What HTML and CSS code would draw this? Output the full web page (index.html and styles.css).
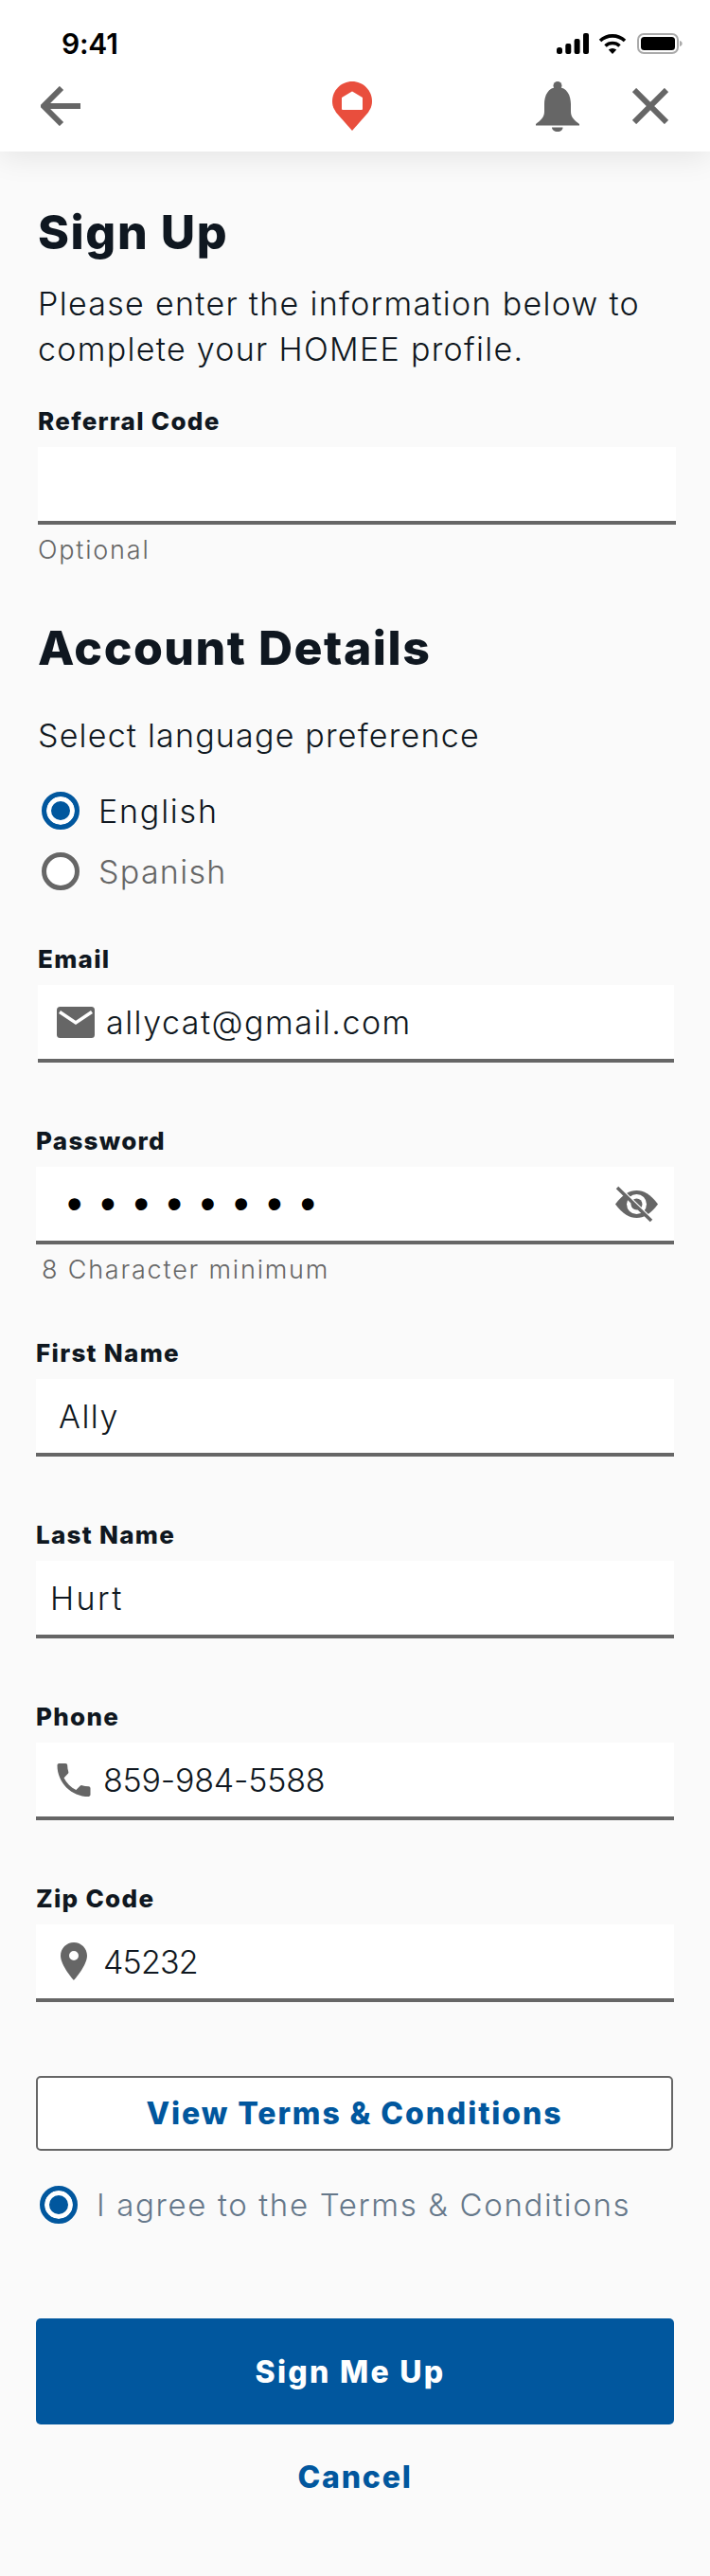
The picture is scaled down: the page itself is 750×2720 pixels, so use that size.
FILE: index.html
```html
<!DOCTYPE html>
<html lang="en">
<head>
<meta charset="UTF-8">
<meta name="viewport" content="width=device-width, initial-scale=1.0">
<title>Sign Up</title>
<link rel="stylesheet" href="styles.css">
</head>
<body>
<header class="topbar">
    <div class="status">
        <span class="time">9:41</span>
        <div class="status-icons">
            <svg class="signal" width="34" height="22" viewBox="0 0 34 22"><rect x="0" y="15" width="6" height="7" rx="2.5"/><rect x="9.3" y="11" width="6" height="11" rx="2"/><rect x="18.6" y="6" width="6" height="16" rx="2"/><rect x="28" y="0" width="6" height="22" rx="2"/></svg>
            <svg class="wifi" width="30" height="22" viewBox="0 0 30 22"><path class="wifi-arc" d="M2 8A19 19 0 0 1 28 8"/><path class="wifi-arc" d="M7.5 13.5A11 11 0 0 1 22.5 13.5"/><path d="M15 22L10.8 17.6A6 6 0 0 1 19.2 17.6Z"/></svg>
            <svg class="battery" width="48" height="22" viewBox="0 0 48 22"><rect class="battery-case" x="1" y="1" width="42" height="20" rx="6"/><rect x="4" y="4" width="36" height="14" rx="3.5"/><path class="battery-nub" d="M45 8c2 .6 2.6 1.6 2.6 3s-.6 2.4-2.6 3z"/></svg>
        </div>
    </div>
    <nav class="nav">
        <svg class="nav-back" width="42" height="42" viewBox="0 0 42 42"><path d="M42 21H4M22 2L3 21L22 40"/></svg>
        <svg class="nav-logo" width="42" height="52" viewBox="0 0 42 52"><path class="logo-pin" d="M21 0C32.6 0 42 9.4 42 21C42 27 39 31.5 36 35L21 52L6 35C3 31.5 0 27 0 21C0 9.4 9.4 0 21 0Z"/><path class="logo-house" d="M21 11.5L31 17.5V29H11V17.5Z"/></svg>
        <svg class="nav-bell" width="46" height="53" viewBox="0 0 46 53"><circle cx="23" cy="4.5" r="4.5"/><path d="M23 6C13 6 9 15 9 24V32C9 38 5 41 0 45V46.5H46V45C41 41 37 38 37 32V24C37 15 33 6 23 6Z"/><path d="M17 48.5H28.500C28.500 51 26.500 53 23 53C19.500 53 17 51 17 48.500Z"/></svg>
        <svg class="nav-close" width="38" height="38" viewBox="0 0 38 38"><path d="M2 2L36 36M36 2L2 36"/></svg>
    </nav>
</header>

<main class="page">
    <h1 class="title">Sign Up</h1>
    <p class="lead">Please enter the information below to complete your HOMEE profile.</p>

    <section class="field field-referral">
        <div class="label">Referral Code</div>
        <div class="input"></div>
        <div class="hint">Optional</div>
    </section>

    <h1 class="title title-account">Account Details</h1>
    <p class="lead lead-language">Select language preference</p>
    <div class="radio-group">
        <div class="radio-row"><span class="radio radio-on"></span>English</div>
        <div class="radio-row radio-row-off"><span class="radio"></span>Spanish</div>
    </div>

    <section class="field field-email">
        <div class="label">Email</div>
        <div class="input">
            <span class="input-icon">
                <svg width="40" height="33" viewBox="0 0 40 33"><rect width="40" height="33" rx="3.500"/><path class="mail-flap" d="M3 5.500L20 17L37 5.500"/></svg>
            </span>
            allycat@gmail.com
        </div>
    </section>

    <section class="field field-hinted">
        <div class="label">Password</div>
        <div class="input input-password">
            <span class="dots">••••••••</span>
            <svg class="eye" width="45" height="39" viewBox="0 0 45 39"><path d="M0 19.500C8 9 15 5 22.500 5C30 5 37 9 45 19.500C37 30 30 34 22.500 34C15 34 8 30 0 19.500Z"/><circle class="eye-ring" cx="22.500" cy="19.500" r="10.500"/><circle cx="22.500" cy="19.500" r="6"/><path class="eye-gap" d="M4 2L40 37"/><path class="eye-slash" d="M2 2L38 37"/></svg>
        </div>
        <div class="hint hint-password">8 Character minimum</div>
    </section>

    <section class="field">
        <div class="label">First Name</div>
        <div class="input input-first">Ally</div>
    </section>

    <section class="field">
        <div class="label">Last Name</div>
        <div class="input input-last">Hurt</div>
    </section>

    <section class="field">
        <div class="label">Phone</div>
        <div class="input input-phone">
            <span class="input-icon">
                <svg width="36" height="35" viewBox="3 3 18 18"><path d="M6.620 10.790c1.440 2.830 3.760 5.140 6.590 6.590l2.200-2.200c.27-.27.67-.36 1.020-.24 1.120.37 2.330.57 3.570.57.55 0 1 .45 1 1V20c0 .55-.45 1-1 1-9.390 0-17-7.610-17-17 0-.55.45-1 1-1h3.500c.55 0 1 .45 1 1 0 1.250.2 2.450.57 3.570.11.35.03.74-.25 1.020l-2.200 2.200z"/></svg>
            </span>
            859-984-5588
        </div>
    </section>

    <section class="field">
        <div class="label">Zip Code</div>
        <div class="input input-zip">
            <span class="input-icon">
                <svg width="28" height="40" viewBox="5 2 14 20"><path d="M12 2C8.130 2 5 5.130 5 9c0 5.250 7 13 7 13s7-7.750 7-13c0-3.870-3.130-7-7-7zm0 9.500a2.500 2.500 0 0 1 0-5 2.500 2.500 0 0 1 0 5z"/></svg>
            </span>
            45232
        </div>
    </section>

    <a class="btn btn-outline" href="#">View Terms &amp; Conditions</a>
    <div class="agree"><span class="radio radio-on"></span>I agree to the Terms &amp; Conditions</div>
    <a class="btn btn-primary" href="#">Sign Me Up</a>
    <a class="cancel" href="#">Cancel</a>
</main>
</body>
</html>
```

FILE: styles.css
```css
:root{
    --brand:#01579e;
    --bg:#fafafa;
    --ink:#0f1720;
    --gray:#666;
}
*{box-sizing:border-box;margin:0;padding:0;}
body{
    font-family:'Inter',sans-serif;
    background:var(--bg);
    color:var(--ink);
}
svg{display:block;}

/* top bar */
.topbar{
    background:#fff;
    height:160px;
    box-shadow:0 6px 30px rgba(0,0,0,.09);
    position:relative;
}
.status{
    height:64px;
    padding:28px 29px 0 65px;
    display:flex;
    justify-content:space-between;
}
.time{
    font-size:30px;
    line-height:36px;
    font-weight:600;
    color:#000;
    letter-spacing:-.2px;
}
.status-icons{
    display:flex;
    align-items:center;
    gap:10px;
    height:36px;
}
.wifi-arc{fill:none;stroke:#000;stroke-width:3.6;}
.battery-case{fill:none;stroke:#aaa;stroke-width:2;}
.battery-nub{fill:#aaa;}
.battery{margin-left:1px;}
.nav{
    height:96px;
    display:flex;
    align-items:center;
    padding-left:43px;
}
.nav svg{fill:var(--gray);}
.nav-back,.nav-close{stroke:var(--gray);stroke-width:6;}
.nav svg.nav-back,.nav svg.nav-close{fill:none;}
.nav-logo{margin-left:266px;}
.nav-bell{margin-left:173px;}
.nav-close{margin-left:56px;}
.logo-pin{fill:#e94e3d;}
.logo-house{fill:#fff;stroke:#fff;stroke-width:2;stroke-linejoin:round;}

/* form */
.page{padding:56px 38px 0;}
.title{
    font-size:50px;
    line-height:58px;
    font-weight:800;
    margin-left:2px;
    letter-spacing:1.6px;
}
.title-account{margin-top:58px;letter-spacing:1.5px;}
.lead{
    font-size:34px;
    line-height:48px;
    font-weight:300;
    letter-spacing:1.3px;
    margin:23px 0 35px 2px;
}
.lead-language{margin:40px 0 23px 2px;letter-spacing:1.2px;}
.radio-group{margin-bottom:44px;}
.radio-row{
    height:64px;
    display:flex;
    align-items:center;
    gap:20px;
    padding-left:6px;
    font-size:34px;
    font-weight:300;
    letter-spacing:1.8px;
}
.radio-row-off{color:var(--gray);letter-spacing:1.3px;}
.radio{
    flex:none;
    width:40px;
    height:40px;
    border:5px solid var(--gray);
    border-radius:50%;
    background:#fff;
}
.radio-on{
    border-color:var(--brand);
    box-shadow:inset 0 0 0 5px #fff;
    background:var(--brand);
}
.field{margin-bottom:66px;}
.field-referral{margin:0 -2px 0 2px;}
.field-email{margin-left:2px;}
.field-hinted{margin-bottom:56px;}
.label{
    font-size:26px;
    line-height:32px;
    font-weight:800;
    padding-top:1px;
    margin-bottom:11px;
    letter-spacing:1.3px;
    height:33px;
}
.input{
    height:82px;
    background:#fff;
    border-bottom:4px solid var(--gray);
    display:flex;
    align-items:center;
    font-size:34px;
    font-weight:300;
    letter-spacing:1.5px;
    padding-left:20px;
}
.input-first{padding-left:24px;}
.input-last{padding-left:15px;letter-spacing:2.4px;}
.input-phone{letter-spacing:-.2px;}
.input-zip{letter-spacing:-.8px;}
.input-password{justify-content:space-between;padding:0 17px 0 33px;}
.input-icon{
    flex:none;
    width:40px;
    margin-right:12px;
    display:flex;
    justify-content:center;
    fill:var(--gray);
}
.input-phone .input-icon,.input-zip .input-icon{margin-right:11px;}
.mail-flap{fill:none;stroke:#fff;stroke-width:3.500;}
.dots{
    font-family:'Liberation Sans',sans-serif;
    font-size:44px;
    font-weight:700;
    letter-spacing:19.8px;
    color:#000;
}
.eye{fill:var(--gray);flex:none;}
.eye-ring{fill:#fff;}
.eye-gap{stroke:#fff;stroke-width:3;}
.eye-slash{stroke:var(--gray);stroke-width:3.500;}
.hint{
    font-size:27px;
    line-height:32px;
    font-weight:300;
    color:var(--gray);
    margin-top:11px;
    letter-spacing:1.8px;
}
.hint-password{margin-left:6px;}
.field-hinted .hint{margin-bottom:-1px;}

/* buttons */
.btn{
    display:flex;
    align-items:center;
    justify-content:center;
    font-size:32px;
    font-weight:800;
    text-decoration:none;
    border-radius:5px;
}
.btn-outline{
    height:79px;
    margin-top:78px;
    width:673px;
    background:#fff;
    border:2px solid var(--gray);
    color:var(--brand);
    letter-spacing:1.9px;
}
.agree{
    display:flex;
    align-items:center;
    gap:20px;
    height:40px;
    margin-top:37px;
    padding-left:4px;
    font-size:33px;
    font-weight:300;
    letter-spacing:1.65px;
    color:#66788a;
}
.btn-primary{
    height:112px;
    margin-top:100px;
    padding-right:10px;
    background:var(--brand);
    color:#fff;
    letter-spacing:2.3px;
}
.cancel{
    display:block;
    margin-top:36px;
    text-align:center;
    font-size:32px;
    line-height:40px;
    font-weight:800;
    color:var(--brand);
    text-decoration:none;
    letter-spacing:1.8px;
}
```
